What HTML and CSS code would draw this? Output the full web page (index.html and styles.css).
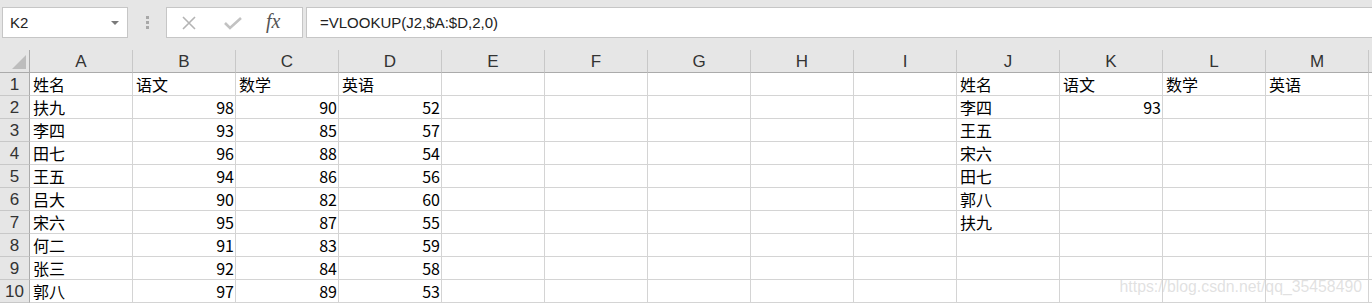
FILE: index.html
```html
<!DOCTYPE html>
<html lang="zh">
<head>
    <meta charset="UTF-8">
    <title>VLOOKUP</title>
    <link rel="stylesheet" href="styles.css">
</head>
<body>
    <div class="toolbar">
        <div class="name-box">
            <span>K2</span>
            <span class="drop"></span>
        </div>
        <div class="grip"><i></i><i></i><i></i></div>
        <div class="fx-buttons">
            <svg width="14" height="14" viewBox="0 0 14 14"><path d="M1 1L13 13M13 1L1 13" stroke="#b4b4b4" stroke-width="1.6" fill="none"/></svg>
            <svg width="18" height="14" viewBox="0 0 18 14"><path d="M1 7L6 12L17 2" stroke="#c2c2c2" stroke-width="2.6" fill="none"/></svg>
            <span class="fx">fx</span>
        </div>
        <div class="formula">=VLOOKUP(J2,$A:$D,2,0)</div>
    </div>
    <div id="sheet" class="sheet"></div>
    <div class="watermark">https://blog.csdn.net/qq_35458490</div>

    <script>
        const cols = ["A", "B", "C", "D", "E", "F", "G", "H", "I", "J", "K", "L", "M", ""];
        const data = [
            ["姓名", "语文", "数学", "英语"],
            ["扶九", 98, 90, 52],
            ["李四", 93, 85, 57],
            ["田七", 96, 88, 54],
            ["王五", 94, 86, 56],
            ["吕大", 90, 82, 60],
            ["宋六", 95, 87, 55],
            ["何二", 91, 83, 59],
            ["张三", 92, 84, 58],
            ["郭八", 97, 89, 53]
        ];
        const lookup = [
            ["姓名", "语文", "数学", "英语"],
            ["李四", 93],
            ["王五"],
            ["宋六"],
            ["田七"],
            ["郭八"],
            ["扶九"]
        ];

        function cell(value) {
            if (value === undefined) return `<div class="cell"></div>`;
            let cls = typeof value === "number" ? "cell num" : "cell";
            return `<div class="${cls}">${value}</div>`;
        }

        let html = `<div class="corner"><span class="tri"></span></div>`;
        cols.forEach(c => html += `<div class="col-head">${c}</div>`);

        data.forEach((row, r) => {
            html += `<div class="row-head">${r + 1}</div>`;
            for (let c = 0; c < cols.length; c++) {
                let value;
                if (c < 4) value = row[c];
                else if (c >= 9 && c < 13 && lookup[r]) value = lookup[r][c - 9];
                html += cell(value);
            }
        });

        document.getElementById("sheet").innerHTML = html;
    </script>
</body>
</html>
```

FILE: styles.css
```css
body {
    margin: 0;
    background: #fff;
    font-family: "Noto Sans CJK SC", "Liberation Sans", sans-serif;
    overflow: hidden;
}
.toolbar {
    height: 50px;
    background: #e6e6e6;
    display: flex;
    align-items: flex-start;
    padding-top: 7px;
    box-sizing: border-box;
}
.name-box {
    margin-left: 2px;
    width: 126px;
    height: 31px;
    box-sizing: border-box;
    background: #fff;
    border: 1px solid #c6c6c6;
    display: flex;
    align-items: center;
    justify-content: space-between;
    padding: 0 8px 0 7px;
    font-family: "Liberation Sans", sans-serif;
    font-size: 15px;
    color: #222;
}
.drop {
    width: 0;
    height: 0;
    border-left: 4px solid transparent;
    border-right: 4px solid transparent;
    border-top: 4px solid #7a7a7a;
}
.grip {
    width: 38px;
    height: 31px;
    display: flex;
    flex-direction: column;
    align-items: center;
    justify-content: center;
    gap: 2px;
}
.grip i {
    display: block;
    width: 3px;
    height: 3px;
    background: #a8a8a8;
}
.fx-buttons {
    width: 137px;
    height: 31px;
    box-sizing: border-box;
    background: #fff;
    border: 1px solid #c6c6c6;
    display: flex;
    align-items: center;
    padding-left: 15px;
    gap: 28px;
}
.fx {
    font-family: "Liberation Serif", serif;
    font-style: italic;
    font-size: 20px;
    color: #555;
    margin-left: -4px;
    margin-top: -3px;
}
.formula {
    margin-left: 3px;
    flex: 1;
    height: 31px;
    box-sizing: border-box;
    background: #fff;
    border: 1px solid #c6c6c6;
    border-right: none;
    display: flex;
    align-items: center;
    padding-left: 13px;
    font-family: "Liberation Sans", sans-serif;
    font-size: 15px;
    color: #222;
}
.sheet {
    display: grid;
    grid-template-columns: 30px repeat(13, 103px) 1fr;
    grid-auto-rows: 23px;
}
.corner, .col-head, .row-head {
    background: #e6e6e6;
    box-sizing: border-box;
    color: #333;
    font-family: "Liberation Sans", sans-serif;
    font-size: 17px;
    display: flex;
    align-items: center;
    justify-content: center;
}
.corner {
    border-right: 1px solid #ababab;
    border-bottom: 1px solid #ababab;
    position: relative;
}
.tri {
    position: absolute;
    right: 3px;
    bottom: 3px;
    width: 0;
    height: 0;
    border-left: 14px solid transparent;
    border-bottom: 14px solid #bdbdbd;
}
.col-head {
    border-right: 1px solid #c8c8c8;
    border-bottom: 1px solid #ababab;
    padding-top: 1px;
}
.row-head {
    border-right: 1px solid #ababab;
    border-bottom: 1px solid #c8c8c8;
    padding-top: 2px;
}
.cell {
    box-sizing: border-box;
    border-right: 1px solid #d4d4d4;
    border-bottom: 1px solid #d4d4d4;
    font-size: 16px;
    color: #000;
    padding: 0 3px;
    line-height: 22px;
    white-space: nowrap;
}
.num {
    text-align: right;
    padding-right: 1px;
}
.watermark {
    position: absolute;
    right: 10px;
    top: 278px;
    font-family: "Liberation Sans", sans-serif;
    font-size: 15.8px;
    white-space: nowrap;
    color: rgba(200, 200, 200, 0.55);
}
```
